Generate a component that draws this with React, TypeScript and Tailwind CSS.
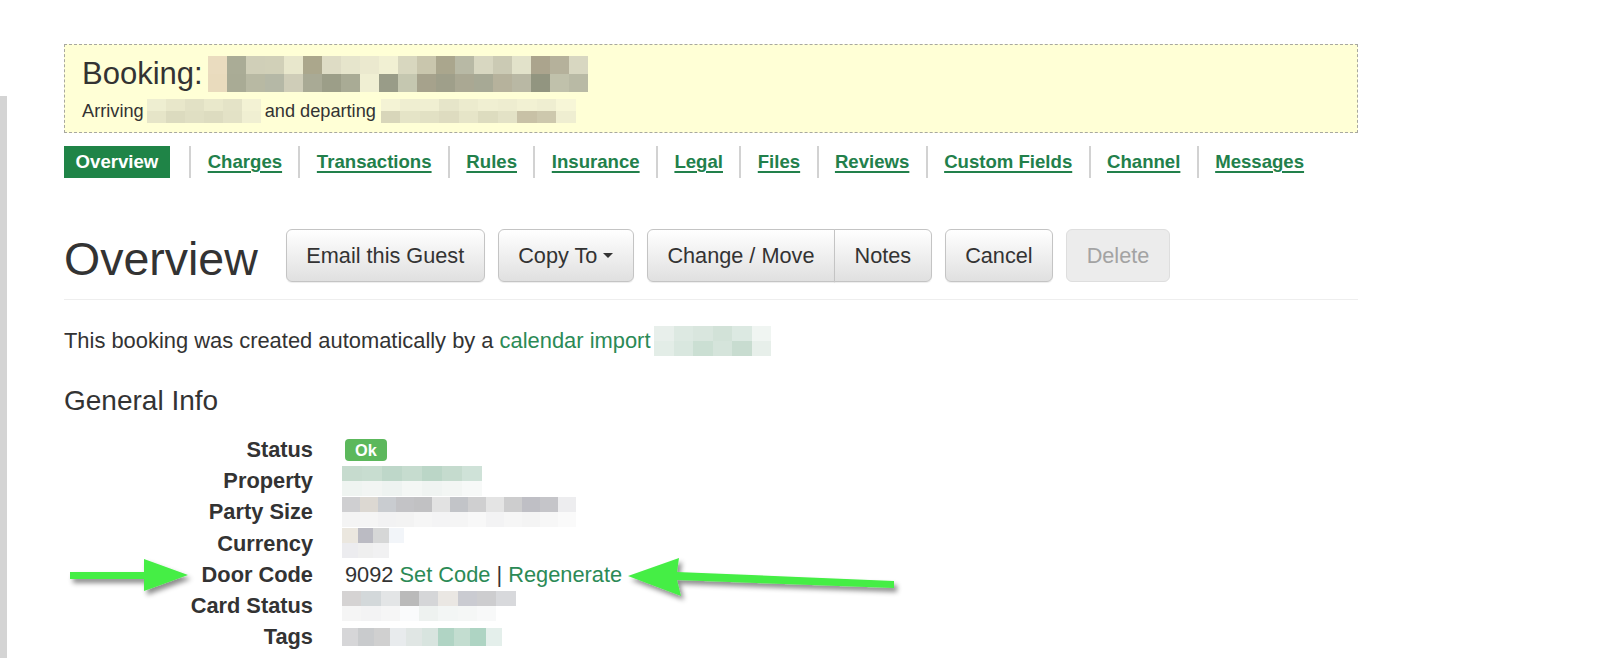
import React from "react";

type Rows = string[][];

function Mosaic({ rows, w, h }: { rows: Rows; w: number; h: number }) {
  return (
    <span className="inline-flex flex-col align-middle">
      {rows.map((r, i) => (
        <span key={i} className="flex">
          {r.map((c, j) => (
            <span key={j} className="block shrink-0" style={{ width: w, height: h, background: c }} />
          ))}
        </span>
      ))}
    </span>
  );
}

const bookingName: Rows = [
  ["#eadcbf", "#aaac96", "#d0cfb8", "#d1d0b8", "#e8e7cc", "#aba78c", "#dedcc5", "#e6e5cc", "#ebe9cf", "#f1f0d3", "#d8d7bf", "#c9c6ad", "#aaa68d", "#b8b9a5", "#d8d7c1", "#cbcab4", "#e2e2ca", "#aba48d", "#b5b19b", "#d8d7c1"],
  ["#e9dbbd", "#a9ab95", "#b8b9a3", "#b5b8a6", "#cfcdb8", "#a9aa95", "#9c9e88", "#a9ab95", "#f0efd3", "#999c88", "#c5c7b0", "#a6a28c", "#9f9f8a", "#aaa893", "#a7a995", "#b6b29c", "#b9b8a4", "#929580", "#c0c1ab", "#b9baa5"],
];
const arriving: Rows = [
  ["#eeeed1", "#e8e7ca", "#e2e1c5", "#e9e8cb", "#e4e3c7", "#f3f2d4"],
  ["#e6e5c8", "#dcdbbf", "#e0dfc3", "#dddcc0", "#e3e2c6", "#f0efd2"],
];
const departing: Rows = [
  ["#f4f3d5", "#efeed1", "#f0efd2", "#e6e5c9", "#ecebce", "#f0efd2", "#eeedd0", "#f2f1d3", "#efeed1", "#f7f6d7"],
  ["#d8d6ba", "#e5e4c7", "#e2e1c4", "#dedcc0", "#e6e5c8", "#dddcbf", "#e3e2c6", "#c8c1a6", "#cdc8ad", "#efeed1"],
];
const calImport: Rows = [
  ["#e8efeb", "#dde9e2", "#d9e6de", "#d2e2d8", "#dce9e2", "#f0f5f2"],
  ["#e3ede7", "#d9e7df", "#cbdfd3", "#d5e4db", "#c8dcd0", "#e7efea"],
];
const property: Rows = [
  ["#c6dbce", "#c8ddd0", "#bed7c9", "#c6dccf", "#bbd6c7", "#c5dbce", "#cfe2d8"],
  ["#eff4f1", "#f2f5f3", "#eef3f1", "#f4f7f5", "#f0f4f2", "#f3f6f4", "#f7f9f8"],
];
const party: Rows = [
  ["#cfcfd1", "#dcd8d2", "#c9ccd0", "#c3c3c6", "#c1c1c3", "#e2e2e2", "#c2c4c8", "#cfcfd0", "#e4e4e4", "#cdcdce", "#bfbfc5", "#c5c5c9", "#ededef"],
  ["#f4f4f4", "#f5f5f5", "#f2f2f3", "#f3f3f3", "#f6f6f6", "#f4f4f5", "#f5f5f5", "#f8f8f8", "#f3f3f4", "#f6f6f6", "#f4f4f4", "#f7f7f7", "#fafafa"],
];
const currency: Rows = [
  ["#ebe7df", "#bbbbc3", "#d6d7d7", "#f2f5f9"],
  ["#ececef", "#efefef", "#f1f1f2", "#ffffff"],
];
const card: Rows = [
  ["#d5d3d3", "#d3d8da", "#e3e5e6", "#bababa", "#d5d6d8", "#eae7e3", "#cacbd1", "#cdcdcf", "#d8d9dc"],
  ["#f5f5f5", "#f3f3f4", "#f6f6f6", "#fafbfc", "#eef2f0", "#f3f6f5", "#f5f7f6", "#f8f9f9", "#ffffff"],
];
const tags: Rows = [
  ["#d6d6d8", "#c9cbcd", "#d0d0d0", "#e8ebed", "#e0e6e4", "#d8e4df", "#b0d4c4", "#c3ddd0", "#aed4c3", "#e4efeb"],
];

const tabs = ["Charges", "Transactions", "Rules", "Insurance", "Legal", "Files", "Reviews", "Custom Fields", "Channel", "Messages"];

const btn =
  "h-[53px] px-[19.5px] border border-[#c4c4c4] bg-gradient-to-b from-white to-[#e0e0e0] text-[#333] text-[21.7px] leading-[31px] flex items-center shadow-[inset_0_1px_0_rgba(255,255,255,0.15),0_1px_1px_rgba(0,0,0,0.075)]";

function Row({ label, children }: { label: string; children: React.ReactNode }) {
  return (
    <div className="flex items-center h-[31.2px]">
      <div className="w-[249px] text-right font-bold">{label}</div>
      <div className="ml-[32px] flex items-center">{children}</div>
    </div>
  );
}

export default function App() {
  return (
    <div className="relative flex w-[1600px] min-h-[658px] h-[658px] overflow-hidden bg-white text-[#333] font-['Liberation_Sans',Arial,sans-serif]">
      <div className="w-[7px] mt-[96px] bg-[#d4d4d4]" />
      <main className="ml-[57px] w-[1294px] pt-[44px]">
        <div className="h-[89px] border border-dashed border-[#a8a8a0] bg-[#ffffd6] px-[17px] pt-[11px]">
          <div className="flex items-center text-[31px] leading-[34px]">
            <span>Booking:</span>
            <span className="ml-[5px] flex">
              <Mosaic rows={bookingName} w={19} h={18} />
            </span>
          </div>
          <div className="mt-[7px] flex items-center text-[18.2px] leading-[24px]">
            <span>Arriving</span>
            <span className="ml-[3px] flex">
              <Mosaic rows={arriving} w={19} h={12} />
            </span>
            <span className="ml-[4px]">and departing</span>
            <span className="ml-[5px] flex">
              <Mosaic rows={departing} w={19.5} h={12} />
            </span>
          </div>
        </div>

        <nav className="mt-[13px] flex items-center h-[32px] text-[18.6px] font-bold">
          <span className="h-[32px] px-[11.6px] mr-[3px] flex items-center bg-[#1f8447] text-white">Overview</span>
          {tabs.map((t) => (
            <React.Fragment key={t}>
              <span className="mx-[16.4px] w-[2px] h-[32px] bg-[#d2d2d2]" />
              <a href="#" className="text-[#22804b] underline decoration-[1.5px] underline-offset-[3px]">
                {t}
              </a>
            </React.Fragment>
          ))}
        </nav>

        <div className="mt-[51px] flex items-end h-[53px]">
          <h1 className="text-[46.5px] leading-[45px] font-normal">Overview</h1>
          <div className="ml-[28px] flex gap-[13px]">
            <button className={btn + " rounded-[6px]"}>Email this Guest</button>
            <button className={btn + " rounded-[6px]"}>
              Copy To
              <span className="ml-[6px] w-0 h-0 border-x-[5px] border-x-transparent border-t-[5px] border-t-[#333]" />
            </button>
            <div className="flex">
              <button className={btn + " rounded-l-[6px]"}>Change / Move</button>
              <button className={btn + " rounded-r-[6px] -ml-px"}>Notes</button>
            </div>
            <button className={btn + " rounded-[6px]"}>Cancel</button>
            <button className="h-[53px] px-[19.5px] rounded-[6px] border border-[#dedede] bg-[#ececec] text-[#a3a3a3] text-[21.7px] leading-[31px] flex items-center">
              Delete
            </button>
          </div>
        </div>
        <div className="mt-[17px] border-t border-[#eeeeee]" />

        <div className="mt-[25px] flex items-center text-[21.9px] leading-[31px]">
          <span>This booking was created automatically by a&nbsp;</span>
          <a href="#" className="text-[#2b8a56]">calendar import</a>
          <span className="ml-[4px] flex">
            <Mosaic rows={calImport} w={19.5} h={15} />
          </span>
        </div>

        <h3 className="mt-[29px] text-[28px] leading-[31px] font-normal">General Info</h3>

        <div className="mt-[18px] text-[21.8px] leading-[31px]">
          <Row label="Status">
            <span className="h-[22px] px-[10px] rounded-[4px] bg-[#5cb85c] text-white font-bold text-[16.3px] leading-[22px]">Ok</span>
          </Row>
          <Row label="Property">
            <span className="-ml-[3px] flex"><Mosaic rows={property} w={20} h={15} /></span>
          </Row>
          <Row label="Party Size">
            <span className="-ml-[3px] flex"><Mosaic rows={party} w={18} h={15} /></span>
          </Row>
          <Row label="Currency">
            <span className="-ml-[3px] flex"><Mosaic rows={currency} w={15.5} h={15} /></span>
          </Row>
          <Row label="Door Code">
            <span>9092&nbsp;</span>
            <a href="#" className="text-[#2b8a56]">Set Code</a>
            <span>&nbsp;|&nbsp;</span>
            <a href="#" className="text-[#2b8a56]">Regenerate</a>
          </Row>
          <Row label="Card Status">
            <span className="-ml-[3px] flex"><Mosaic rows={card} w={19.3} h={15} /></span>
          </Row>
          <Row label="Tags">
            <span className="-ml-[3px] flex"><Mosaic rows={tags} w={16} h={18} /></span>
          </Row>
        </div>
      </main>

      <svg className="absolute left-0 top-0 pointer-events-none" width="1600" height="658" viewBox="0 0 1600 658">
        <defs>
          <filter id="sh" x="-20%" y="-50%" width="140%" height="200%">
            <feDropShadow dx="3" dy="4" stdDeviation="2.5" floodColor="#000" floodOpacity="0.45" />
          </filter>
        </defs>
        <polygon
          filter="url(#sh)"
          fill="#45ee45"
          points="70,572 144,572 144,559 188,575 144,591 144,579 70,579"
        />
        <polygon
          filter="url(#sh)"
          fill="#45ee45"
          points="628,576 679,558 677,572 894,581 894,588 677,580 681,596"
        />
      </svg>
    </div>
  );
}
